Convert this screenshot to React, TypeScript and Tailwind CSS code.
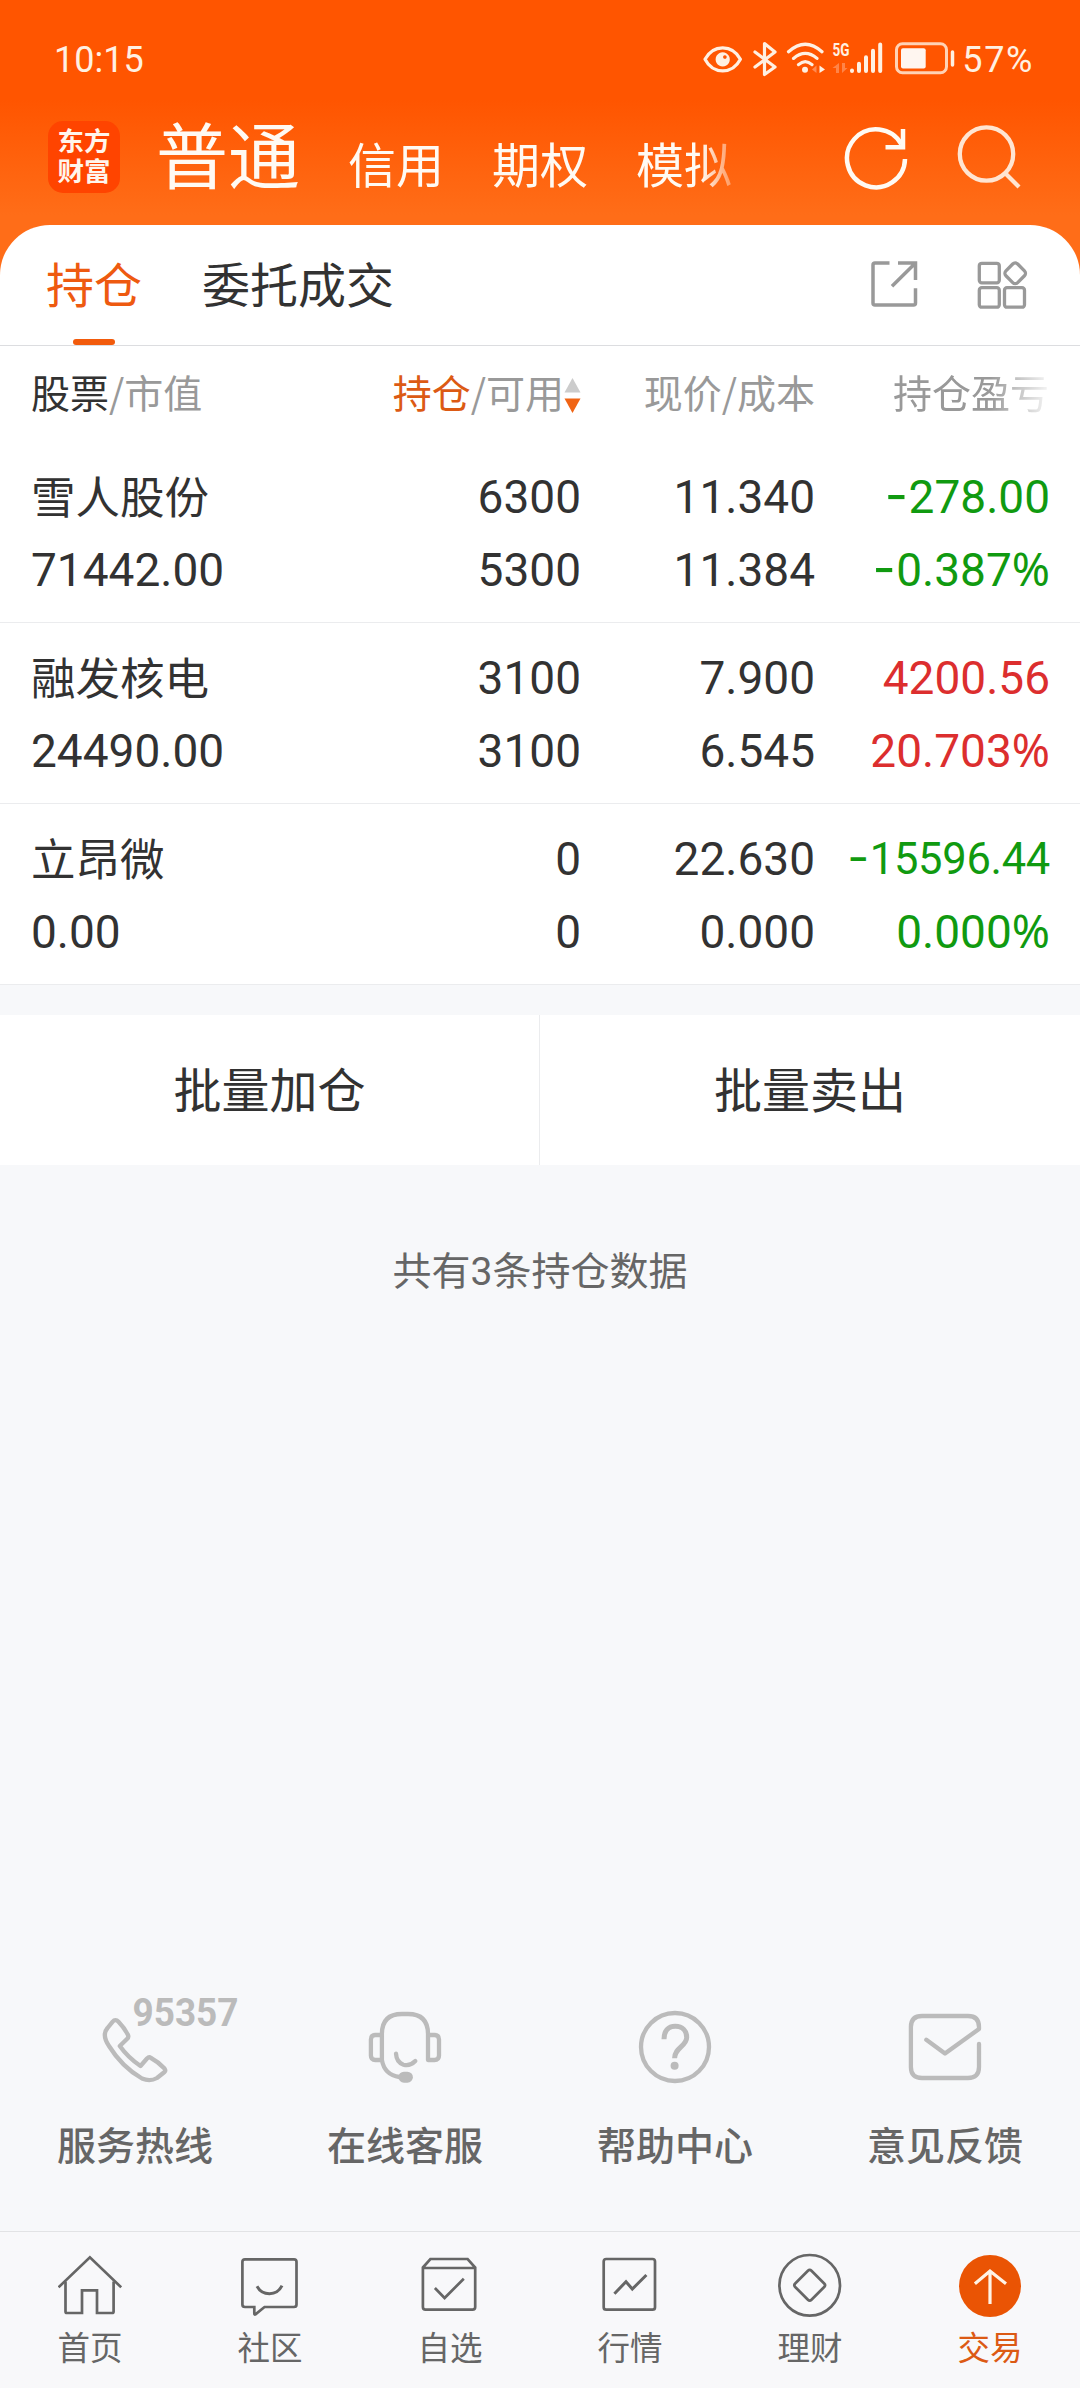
import React from "react";

type Holding = {
  name: string;
  value: string;
  held: string;
  usable: string;
  price: string;
  cost: string;
  profit: string;
  rate: string;
  tone: "up" | "down";
  compact?: boolean;
};

const holdings: Holding[] = [
  { name: "雪人股份", value: "71442.00", held: "6300", usable: "5300", price: "11.340", cost: "11.384", profit: "-278.00", rate: "-0.387%", tone: "down" },
  { name: "融发核电", value: "24490.00", held: "3100", usable: "3100", price: "7.900", cost: "6.545", profit: "4200.56", rate: "20.703%", tone: "up" },
  { name: "立昂微", value: "0.00", held: "0", usable: "0", price: "22.630", cost: "0.000", profit: "-15596.44", rate: "0.000%", tone: "down", compact: true },
];

const CREAM = "#fff0e2";

function StatusIcons() {
  return (
    <svg width="256" height="40" viewBox="0 0 256 40" fill="none" stroke={CREAM} strokeLinecap="round" strokeLinejoin="round">
      <path d="M4 20.3C12 5 31.400 5 39.400 20.3C31.400 35.700 12 35.700 4 20.300Z" strokeWidth="3.200" />
      <path fillRule="evenodd" d="M21.700 13.300a7.100 7.100 0 1 0 .01 0ZM23.900 16.200a1.800 1.800 0 1 1-.01 0Z" fill={CREAM} stroke="none" />
      <path d="M54 13 74 28 63.500 35.500V4.500L74 13 54 28" strokeWidth="3.200" />
      <path d="M87.500 12.800Q104.300-2.300 121 12.800M92.500 19.400Q104.300 9.500 116 19.400M97.500 25.600Q104.300 19.500 111 25.600" strokeWidth="3.200" />
      <circle cx="104" cy="30.700" r="3" fill={CREAM} stroke="none" />
      <path d="M115.500 26.500V34L111 30.500Z" fill="#ff8a52" stroke="none" />
      <path d="M118.500 26.500V34L124 30.500Z" fill={CREAM} stroke="none" />
      <text x="131.500" y="17.300" fontSize="18" fontWeight="700" fontFamily="Roboto, sans-serif" textLength="17" lengthAdjust="spacingAndGlyphs" fill={CREAM} stroke="none">5G</text>
      <path d="M138 24V34H135V29H131.500ZM141 24V34L146.500 29H144V24Z" fill="#ff8448" stroke="none" />
      <path d="M151 31.500V32M158 24.700V32M165 18.300V32M172 11.700V32M179.200 5.500V32" strokeWidth="4" />
      <rect x="195.500" y="4.800" width="50" height="29" rx="6" strokeWidth="3" stroke="#ffd2b5" />
      <rect x="200" y="9.300" width="24.700" height="20.200" rx="2" fill="#fff6f0" stroke="none" />
      <path d="M251.500 13V26" strokeWidth="3.500" />
    </svg>
  );
}

function RefreshIcon() {
  return (
    <svg width="64" height="64" viewBox="0 0 64 64" fill="none" stroke="#fffaf3" strokeWidth="4.500">
      <path d="M61 33A29 29 0 1 1 57.500 18.500" />
      <path d="M59 3V21.200H41.500" />
    </svg>
  );
}

function SearchIcon() {
  return (
    <svg width="64" height="64" viewBox="0 0 64 64" fill="none" stroke="#ffe5d2" strokeWidth="4.300" className="overflow-visible">
      <circle cx="29.500" cy="28" r="26.700" />
      <path d="M47.500 46.500 62 61" />
    </svg>
  );
}

function ShareIcon() {
  return (
    <svg width="50" height="50" viewBox="0 0 50 50" fill="none" stroke="#999" strokeWidth="3.500">
      <path d="M19.500 3H5Q3 3 3 5V43Q3 45 5 45H43.500Q45.500 45 45.500 43V28.300" />
      <path d="M28 3H45.500V20M45.500 3 22 26.300" />
    </svg>
  );
}

function GridIcon() {
  return (
    <svg width="52" height="50" viewBox="0 0 52 50" fill="none" stroke="#999" strokeWidth="3.300">
      <rect x="3.300" y="3.300" width="20" height="19.500" rx="2.500" />
      <rect x="3.300" y="27.700" width="20" height="19.500" rx="2.500" />
      <rect x="28.500" y="27.700" width="20" height="19.500" rx="2.500" />
      <rect x="30.900" y="5" width="16.600" height="16.600" rx="3.500" transform="rotate(45 39.200 13.300)" />
    </svg>
  );
}

function PhoneIcon() {
  return (
    <svg width="140" height="90" viewBox="0 0 140 90" fill="none" stroke="#bbb" strokeWidth="4.300" strokeLinejoin="round" className="overflow-visible">
      <path d="M12.500 23.800Q15.400 20.500 18.500 23.800Q24.500 30 28 37Q29 39 27 41L19.800 48Q28 59.500 40.500 68L47 60.500Q49 58.500 51 60Q58.500 64 64.500 70.500Q66 72.500 64.500 74L57 80Q50 84 42 80.500Q22 69 9 48Q1.500 37 7.500 30Z" />
      <text x="32.500" y="28" fontSize="38" fontWeight="700" fontFamily="Roboto, sans-serif" textLength="106" lengthAdjust="spacingAndGlyphs" fill="#bbb" stroke="none">95357</text>
    </svg>
  );
}

function HeadsetIcon() {
  return (
    <svg width="80" height="80" viewBox="0 0 80 80" fill="none" stroke="#bbb" strokeWidth="4.300" strokeLinecap="round" strokeLinejoin="round">
      <path d="M16.900 52V26Q16.900 6 37 6H43Q63 6 63 26V52H69.500Q74 52 74 47.500V31.500Q74 27 69.500 27H63" />
      <path d="M16.900 27H10.400Q5.900 27 5.900 31.500V47.500Q5.900 52 10.400 52H16.900Q19.500 67 34.400 69" />
      <path d="M31 45.700Q31.500 54.500 38.500 56.700Q45 58.500 50.300 53" />
      <rect x="33.400" y="63.700" width="14.500" height="11" rx="5.500" fill="#bbb" stroke="none" />
    </svg>
  );
}

function HelpIcon() {
  return (
    <svg width="80" height="80" viewBox="0 0 80 80" fill="none" stroke="#bbb" strokeWidth="4.300">
      <circle cx="40" cy="40" r="34" />
      <path d="M29 32.300C29 24 33 19.300 40.300 19.300S51.700 24 51.700 30.500C51.700 39 39.600 40.500 39.600 51.300" strokeWidth="5" />
      <circle cx="39.600" cy="58.700" r="4" fill="#bbb" stroke="none" />
    </svg>
  );
}

function MailIcon() {
  return (
    <svg width="80" height="80" viewBox="0 0 80 80" fill="none" stroke="#bbb" strokeWidth="4.300" strokeLinecap="round" strokeLinejoin="round">
      <path d="M74 37V60Q74 71 63 71H17Q5.900 71 5.900 60V20Q5.900 9 17 9H63Q74 9 74 20V22L40 46.500 21.300 32.800" />
    </svg>
  );
}

const navIcons: Record<string, React.ReactNode> = {
  home: (
    <>
      <path d="M0.500 34.300 31.900 4.300 63.200 34.300" />
      <path d="M7.500 28.500V58.500Q7.500 60 9 60H24V37.300H39V60H54Q55.600 60 55.600 58.500V28.500" />
    </>
  ),
  community: (
    <>
      <path d="M7 6.300H56Q58.500 6.300 58.500 8.800V51.500Q58.500 54 56 54H26.500L17.500 61.300Q16.300 62 16.300 60.500V54H7Q4.400 54 4.400 51.500V8.800Q4.400 6.300 7 6.300Z" />
      <path d="M19 33.300Q23 40.700 31.500 40.700T44 32.700" strokeWidth="3" />
    </>
  ),
  watch: (
    <>
      <path d="M4.900 14.500 12.400 6H49.600L57.200 14.500V54Q57.200 56.700 54.500 56.700H7.600Q4.900 56.700 4.900 54ZM4.900 15H57.200" />
      <path d="M16.900 35 26.600 45 45.800 25.700" />
    </>
  ),
  market: (
    <>
      <rect x="5.700" y="6" width="51.300" height="50.700" rx="2.500" />
      <path d="M16.400 40.700 28 28.700 34.300 36 48.400 22" strokeWidth="3" />
    </>
  ),
  wealth: (
    <>
      <circle cx="31.700" cy="32.300" r="30.300" />
      <rect x="20.200" y="20.800" width="23" height="23" rx="2.500" transform="rotate(45 31.700 32.300)" />
    </>
  ),
  trade: (
    <>
      <circle cx="32" cy="33" r="31" fill="#ea5404" stroke="none" />
      <path d="M32 51V18M16.900 30.700 32 18 48 30.700" stroke="#fff3e6" strokeWidth="3.200" />
    </>
  ),
};

const navItems = [
  { label: "首页", icon: "home" },
  { label: "社区", icon: "community" },
  { label: "自选", icon: "watch" },
  { label: "行情", icon: "market" },
  { label: "理财", icon: "wealth" },
  { label: "交易", icon: "trade" },
];

const services = [
  { label: "服务热线", icon: <div className="-mt-[9px] ml-[69px]"><PhoneIcon /></div> },
  { label: "在线客服", icon: <div className="mt-px"><HeadsetIcon /></div> },
  { label: "帮助中心", icon: <HelpIcon /> },
  { label: "意见反馈", icon: <MailIcon /> },
];

/* The minus and percent signs use wider faces than Roboto's own. */
function Amount({ text, className }: { text: string; className: string }) {
  const negative = text.startsWith("-");
  const percent = text.endsWith("%");
  const digits = text.replace("-", "").replace("%", "");
  return (
    <span className={className}>
      {negative && <span className="font-['Inter'] text-[1.1em] leading-none tracking-[0.5px]">-</span>}
      {digits}
      {percent && <span className="font-['Noto_Sans'] leading-none">%</span>}
    </span>
  );
}

function HoldingRow({ h }: { h: Holding }) {
  const color = h.tone === "up" ? "text-[#dc2e2e]" : "text-[#109a10]";
  return (
    <div className="grid h-[181px] grid-cols-[380px_170px_234px_235px] grid-rows-[73px_73px] border-b border-[#ebecee] pl-[31px] pt-[19px] text-[46px] leading-[73px] text-[#323232]">
      <span className="pt-[2px] text-[44.500px]">{h.name}</span>
      <span className="text-right">{h.held}</span>
      <span className="text-right">{h.price}</span>
      <Amount text={h.profit} className={`${color} text-right ${h.compact ? "-ml-4 text-[43.500px] tracking-[-0.300px]" : ""}`} />
      <span>{h.value}</span>
      <span className="text-right">{h.usable}</span>
      <span className="text-right">{h.cost}</span>
      <Amount text={h.rate} className={`${color} text-right`} />
    </div>
  );
}

export default function App() {
  return (
    <div className="flex h-[2388px] w-[1080px] flex-col overflow-hidden bg-[#f7f8fa] font-[Roboto,'Noto_Sans_CJK_SC',sans-serif]">
      <div className="bg-[linear-gradient(180deg,#ff5500_0px,#ff5500_100px,#ff6d18_215px,#ff6d18_100%)]">
        <header className="h-[225px]">
          <div className="flex h-[118px] items-center justify-between pl-[54px] pr-[46px] text-[36px] text-[#fff0e2]">
            <span className="pt-[2px]">10:15</span>
            <div className="flex items-center">
              <StatusIcons />
              <span className="ml-[5px] pt-[2px] tracking-[1.600px]">57%</span>
            </div>
          </div>
          <div className="flex pl-[48px]">
            <div className="mt-[3px] flex h-[72px] w-[72px] flex-col items-center justify-center rounded-[15px] bg-[#ff4400] text-[26.500px] font-bold leading-[30px] text-[#fff5ec]">
              <span>东方</span>
              <span>财富</span>
            </div>
            <nav className="ml-[36px] flex h-[94px] w-[590px] items-baseline gap-[48px] whitespace-nowrap pt-[3px] text-[48px] leading-[76px] text-[#fffaf3] [mask-image:linear-gradient(90deg,#000_545px,transparent_592px)]">
              <span className="text-[72px]">普通</span>
              <span>信用</span>
              <span>期权</span>
              <span>模拟</span>
            </nav>
            <div className="ml-[98px] mt-2 flex gap-[49px]">
              <RefreshIcon />
              <SearchIcon />
            </div>
          </div>
        </header>

        <section className="rounded-t-[50px] bg-white">
          <div className="flex h-[121px] items-center justify-between border-b border-[#dcdde0] pl-[46px] pr-[52px] text-[48px] text-[#323232]">
            <div className="flex h-full gap-[60px]">
              <div className="flex flex-col items-center text-[#ee5a10]">
                <span className="h-[114px] leading-[123px]">持仓</span>
                <span className="h-[6px] w-[42px] rounded-full bg-[#f25b0c]" />
              </div>
              <span className="leading-[123px]">委托成交</span>
            </div>
            <div className="flex gap-[56px] pb-px">
              <ShareIcon />
              <GridIcon />
            </div>
          </div>

          <div className="grid h-[96px] grid-cols-[361px_189px_234px_234px] items-center pb-[5px] pl-[31px] text-[39px] text-[#999] font-['Noto_Sans_CJK_SC',sans-serif]">
            <span><span className="text-[#323232]">股票</span>/市值</span>
            <span className="flex items-center justify-end whitespace-nowrap">
              <span><span className="text-[#dc5a14]">持仓</span>/可用</span>
              <svg width="17" height="36" viewBox="0 0 17 36" className="mt-[8px]">
                <path d="M8.500 0 16.500 14.500H.5Z" fill="#ccc" />
                <path d="M8.500 35 .5 20.500H16.500Z" fill="#f06414" />
              </svg>
            </span>
            <span className="text-right">现价/成本</span>
            <span className="text-right [mask-image:linear-gradient(90deg,#000_175px,transparent_240px)]">持仓盈亏</span>
          </div>

          {holdings.map((h) => (
            <HoldingRow key={h.name} h={h} />
          ))}
        </section>
      </div>

      <div className="mt-[30px] grid h-[150px] grid-cols-2 bg-white text-center text-[48px] leading-[153px] text-[#323232]">
        <span className="h-[150px] border-r border-[#ebecee]">批量加仓</span>
        <span>批量卖出</span>
      </div>

      <p className="mt-[77px] text-center text-[39px] leading-[60px] text-[#666]">共有3条持仓数据</p>

      <div className="mt-auto grid grid-cols-4 pb-[55px] text-[39px] font-medium text-[#666]">
        {services.map((s) => (
          <div key={s.label} className="flex flex-col items-center">
            <div className="flex h-[98px] items-end">
              <div className="flex h-[89px] items-start">{s.icon}</div>
            </div>
            <span className="mt-[22px] leading-[58px]">{s.label}</span>
          </div>
        ))}
      </div>

      <nav className="grid h-[157px] grid-cols-6 border-t border-[#e2e3e5] bg-[#f8f8fa] pt-[21px] text-[32.500px] text-[#666]">
        {navItems.map((n) => (
          <div key={n.label} className={`flex flex-col items-center ${n.icon === "trade" ? "text-[#dc5a14]" : ""}`}>
            <svg width="64" height="66" viewBox="0 0 64 66" fill="none" stroke="#666" strokeWidth="2.700">
              {navIcons[n.icon]}
            </svg>
            <span className="mt-[6px] leading-[48px]">{n.label}</span>
          </div>
        ))}
      </nav>
    </div>
  );
}
